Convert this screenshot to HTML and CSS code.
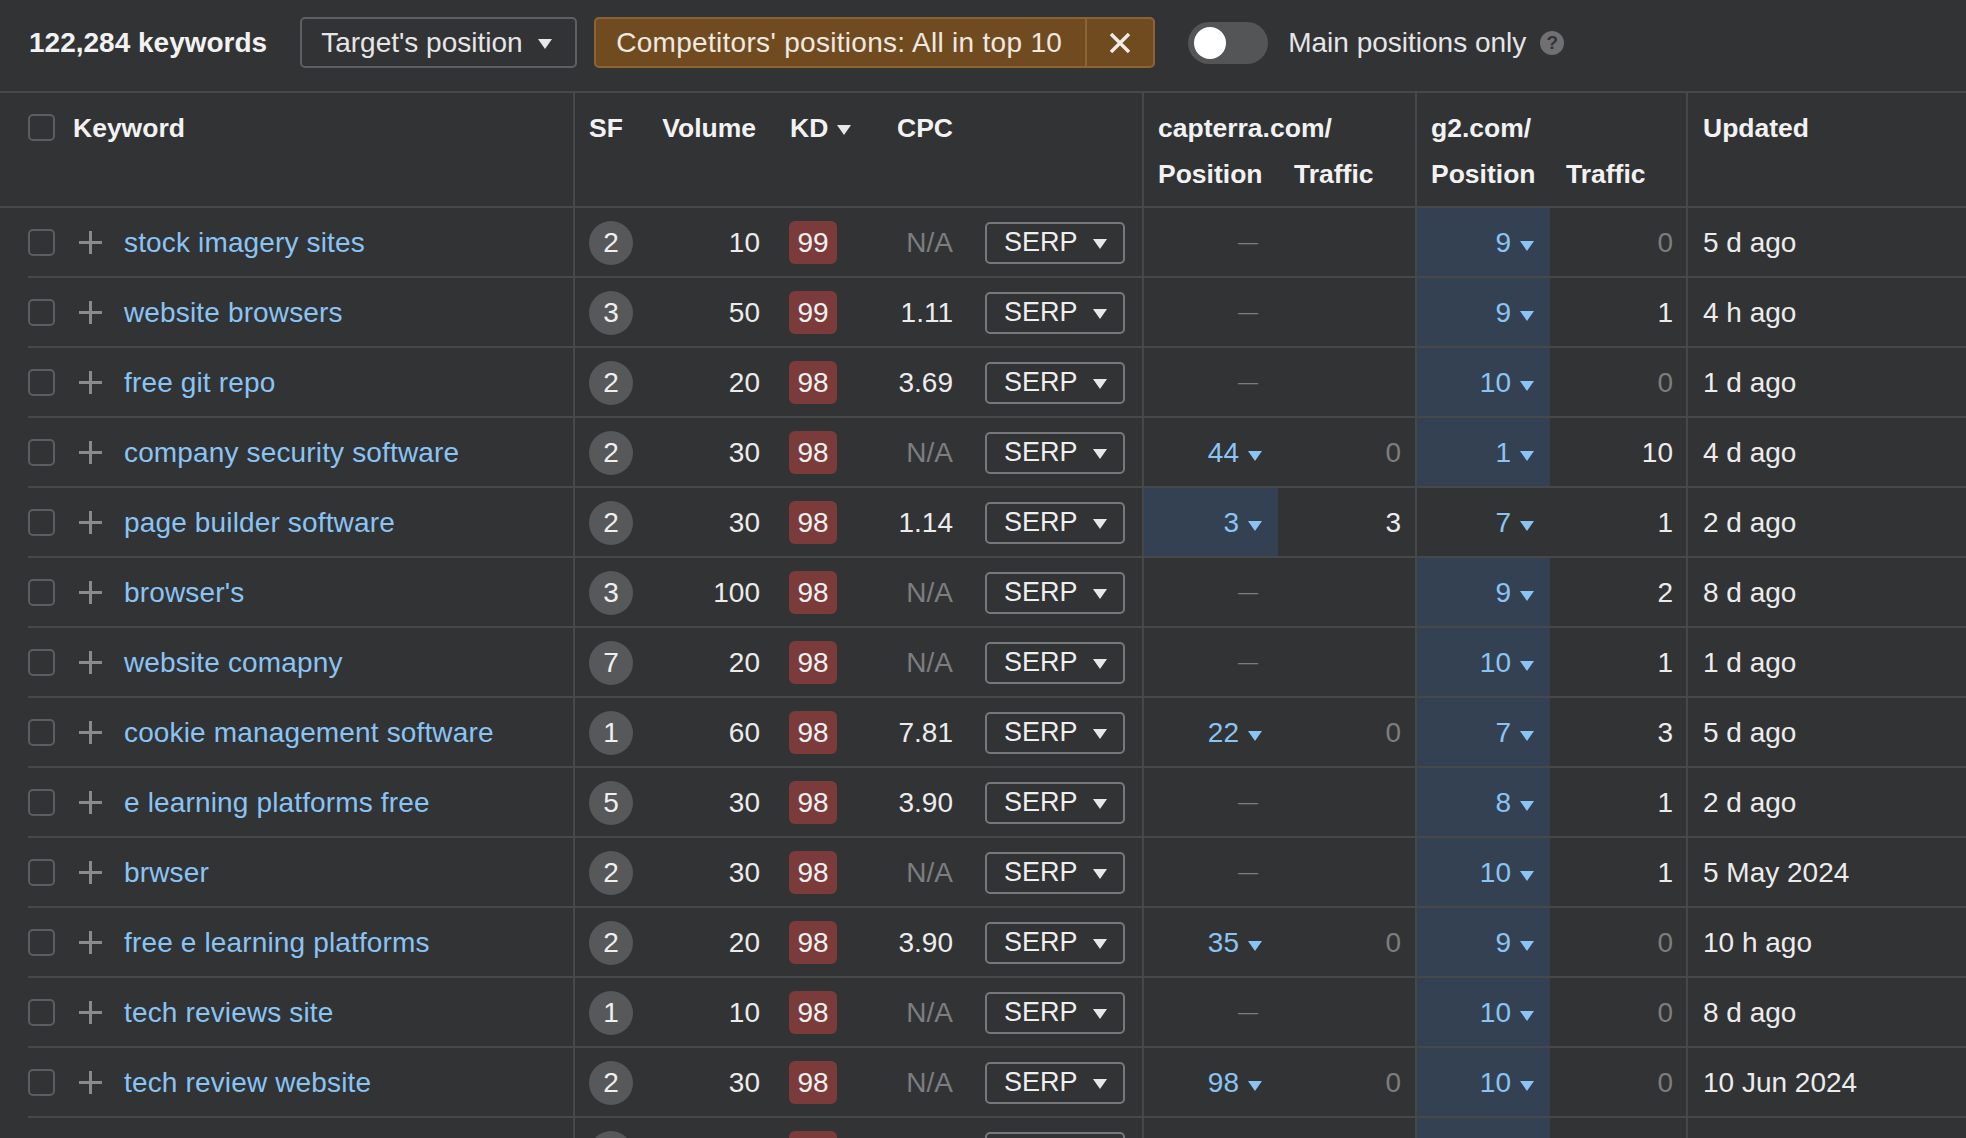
FILE: index.html
```html
<!DOCTYPE html>
<html lang="en">
<head>
<meta charset="utf-8">
<title>Keywords</title>
<link rel="stylesheet" href="styles.css">
</head>
<body>
<div class="topbar">
  <span class="count">122,284 keywords</span>
  <div class="select">Target's position<span class="caret"></span></div>
  <div class="chip">
    <span class="chip-label">Competitors' positions: All in top 10</span>
    <span class="chip-close"><svg width="24" height="24" viewBox="0 0 24 24"><path d="M3 3L21 21M21 3L3 21" stroke="#f1ece4" stroke-width="3.4" fill="none"/></svg></span>
  </div>
  <span class="toggle"><span class="knob"></span></span>
  <span class="toggle-label">Main positions only</span>
  <span class="help">?</span>
</div>

<div class="grid head">
  <div class="h kw"><span class="cb"></span>Keyword</div>
  <div class="h sf">SF</div>
  <div class="h vol">Volume</div>
  <div class="h kd">KD<span class="caret small"></span></div>
  <div class="h cpc">CPC</div>
  <div class="h serp"></div>
  <div class="h grp cap">
    <div class="dom">capterra.com/</div>
    <div class="sub"><span>Position</span><span>Traffic</span></div>
  </div>
  <div class="h grp g2">
    <div class="dom">g2.com/</div>
    <div class="sub"><span>Position</span><span>Traffic</span></div>
  </div>
  <div class="h upd">Updated</div>
</div>

<div id="rows"></div>
<script src="app.js"></script>
</body>
</html>
```
FILE: styles.css
```css
html, body {
  margin: 0;
  padding: 0;
  height: 100%;
  overflow: hidden;
  background: #323335;
}
body {
  font-family: "Liberation Sans", Arial, "Helvetica Neue", sans-serif;
  font-size: 28px;
  color: #ececec;
}
* { box-sizing: border-box; }

/* Top bar */
.topbar {
  height: 93px;
  border-bottom: 2px solid #47484a;
  display: flex;
  align-items: center;
  padding: 0 0 6px 29px;
}
.count {
  font-weight: bold;
  color: #f2f2f2;
}
.select {
  margin-left: 33px;
  height: 51px;
  width: 277px;
  border: 2px solid #5e5f62;
  border-radius: 5px;
  display: flex;
  align-items: center;
  padding: 0 0 0 19px;
  color: #e6e6e6;
}
.caret {
  display: inline-block;
  width: 0;
  height: 0;
  border-left: 7px solid transparent;
  border-right: 7px solid transparent;
  border-top: 10px solid #e8e8e8;
  margin-left: 15px;
  margin-top: 3px;
}
.caret.small {
  border-left-width: 7px;
  border-right-width: 7px;
  border-top-width: 10px;
  margin-left: 9px;
  margin-top: 8px;
}
.chip {
  margin-left: 17px;
  height: 51px;
  display: flex;
  background: #714b20;
  border: 2px solid #8c6434;
  border-radius: 5px;
  color: #efe9e1;
}
.chip-label {
  width: 489px;
  display: flex;
  align-items: center;
  padding-left: 20px;
  letter-spacing: 0.3px;
}
.chip-close {
  width: 68px;
  border-left: 2px solid #8c6434;
  display: flex;
  align-items: center;
  justify-content: center;
}
.toggle {
  margin-left: 33px;
  width: 80px;
  height: 42px;
  border-radius: 21px;
  background: #545557;
  position: relative;
}
.knob {
  position: absolute;
  left: 6px;
  top: 5px;
  width: 32px;
  height: 32px;
  border-radius: 50%;
  background: #ffffff;
}
.toggle-label {
  margin-left: 20px;
  color: #e6e6e6;
}
.help {
  margin-left: 14px;
  width: 24px;
  height: 24px;
  border-radius: 50%;
  background: #707072;
  color: #323335;
  font-size: 19px;
  font-weight: bold;
  display: flex;
  align-items: center;
  justify-content: center;
}

/* Grid */
.grid {
  display: grid;
  grid-template-columns: 575px 59px 126px 77px 116px 191px 134px 139px 133px 138px 1fr;
}
.head {
  height: 115px;
  border-bottom: 2px solid #47484a;
}
.h {
  font-weight: bold;
  font-size: 26.5px;
  color: #f2f2f2;
  line-height: 46px;
  padding-top: 12px;
  white-space: nowrap;
}
.h.kw {
  display: flex;
  align-items: flex-start;
  padding-left: 28px;
  border-right: 2px solid #47484a;
}
.h.kw .cb { margin-top: 9px; margin-right: 18px; }
.h.sf { padding-left: 14px; }
.h.vol { text-align: right; padding-right: 4px; }
.h.kd { padding-left: 30px; display: flex; align-items: flex-start; }
.h.kd .caret { margin-top: 20px; }
.h.cpc { text-align: right; }
.h.serp { border-right: 2px solid #47484a; }
.h.cap { grid-column: span 2; border-right: 2px solid #47484a; }
.h.g2 { grid-column: span 2; border-right: 2px solid #47484a; }
.dom { padding-left: 14px; }
.sub { display: grid; }
.cap .sub { grid-template-columns: 134px 1fr; }
.g2 .sub { grid-template-columns: 133px 1fr; }
.sub span:first-child { padding-left: 14px; }
.sub span:last-child { padding-left: 16px; }
.h.upd { padding-left: 15px; }

.cb {
  display: inline-block;
  width: 27px;
  height: 27px;
  border: 2px solid #5c5d60;
  border-radius: 5px;
  flex: none;
}

/* Rows */
.row { height: 70px; }
.c {
  border-bottom: 2px solid #47484a;
  display: flex;
  align-items: center;
  white-space: nowrap;
  padding-top: 1px;
}
.c.kw {
  margin-left: 28px;
  border-right: 2px solid #47484a;
}
.plus { margin-left: 23px; margin-right: 21px; flex: none; display: block; }
.kw-link { color: #8ac4f4; letter-spacing: 0.15px; }
.c.sf { padding-left: 14px; }
.sfc {
  width: 44px;
  height: 44px;
  border-radius: 50%;
  background: #57585a;
  display: flex;
  align-items: center;
  justify-content: center;
  color: #efefef;
}
.c.vol { justify-content: flex-end; }
.c.kd { padding-left: 29px; }
.kdb {
  width: 48px;
  height: 43px;
  border-radius: 6px;
  background: #7a3b3a;
  display: flex;
  align-items: center;
  justify-content: center;
  color: #f1f1f1;
}
.c.cpc { justify-content: flex-end; }
.muted { color: #7c7d7f; }
.c.serp {
  padding-left: 32px;
  border-right: 2px solid #47484a;
}
.serpb {
  width: 140px;
  height: 42px;
  border: 2px solid #77787b;
  border-radius: 5px;
  display: flex;
  align-items: center;
  justify-content: space-between;
  padding: 0 16px 0 17px;
  font-size: 27px;
  color: #efefef;
}
.serpb .caret { margin: 2px 0 0 0; }
.c.pos { justify-content: flex-end; padding-right: 16px; color: #8ac4f4; }
.c.pos.hl { background: #344152; }
.tri {
  display: inline-block;
  width: 0;
  height: 0;
  border-left: 7.5px solid transparent;
  border-right: 7.5px solid transparent;
  border-top: 10px solid #8ac4f4;
  margin-left: 9px;
  margin-top: 7px;
}
.c.dash { justify-content: flex-start; padding-left: 94px; color: #7c7d7f; font-size: 20px; }
.c.tr { justify-content: flex-end; padding-right: 14px; }
.c.tr.cap-tr { border-right: 2px solid #47484a; }
.c.tr.g2-tr { padding-right: 13px; border-right: 2px solid #47484a; }
.c.upd { padding-left: 15px; }
```
FILE: app.js
```javascript
var data = [
  ["stock imagery sites", 2, 10, 99, "N/A", null, null, 9, 0, "5 d ago"],
  ["website browsers", 3, 50, 99, "1.11", null, null, 9, 1, "4 h ago"],
  ["free git repo", 2, 20, 98, "3.69", null, null, 10, 0, "1 d ago"],
  ["company security software", 2, 30, 98, "N/A", 44, 0, 1, 10, "4 d ago"],
  ["page builder software", 2, 30, 98, "1.14", 3, 3, 7, 1, "2 d ago"],
  ["browser's", 3, 100, 98, "N/A", null, null, 9, 2, "8 d ago"],
  ["website comapny", 7, 20, 98, "N/A", null, null, 10, 1, "1 d ago"],
  ["cookie management software", 1, 60, 98, "7.81", 22, 0, 7, 3, "5 d ago"],
  ["e learning platforms free", 5, 30, 98, "3.90", null, null, 8, 1, "2 d ago"],
  ["brwser", 2, 30, 98, "N/A", null, null, 10, 1, "5 May 2024"],
  ["free e learning platforms", 2, 20, 98, "3.90", 35, 0, 9, 0, "10 h ago"],
  ["tech reviews site", 1, 10, 98, "N/A", null, null, 10, 0, "8 d ago"],
  ["tech review website", 2, 30, 98, "N/A", 98, 0, 10, 0, "10 Jun 2024"],
  ["tech review sites", 2, 30, 98, "N/A", null, null, 10, 0, "3 d ago"]
];

var plus = '<svg class="plus" width="25" height="25" viewBox="0 0 25 25"><path d="M12.5 1V24M1 12.5H24" stroke="#8a8b8d" stroke-width="3" fill="none"/></svg>';

var html = "";
data.forEach(function (r) {
  var capPos = r[5], capTr = r[6], g2Pos = r[7], g2Tr = r[8];
  var capBest = capPos !== null && capPos < g2Pos;
  var s = '<div class="grid row">';
  s += '<div class="c kw"><span class="cb"></span>' + plus + '<span class="kw-link">' + r[0] + '</span></div>';
  s += '<div class="c sf"><span class="sfc">' + r[1] + '</span></div>';
  s += '<div class="c vol">' + r[2] + '</div>';
  s += '<div class="c kd"><span class="kdb">' + r[3] + '</span></div>';
  s += '<div class="c cpc' + (r[4] === "N/A" ? ' muted' : '') + '">' + r[4] + '</div>';
  s += '<div class="c serp"><span class="serpb">SERP<span class="caret"></span></span></div>';
  if (capPos === null) {
    s += '<div class="c dash">—</div>';
    s += '<div class="c tr cap-tr"></div>';
  } else {
    s += '<div class="c pos' + (capBest ? ' hl' : '') + '">' + capPos + '<span class="tri"></span></div>';
    s += '<div class="c tr cap-tr' + (capTr === 0 ? ' muted' : '') + '">' + capTr + '</div>';
  }
  s += '<div class="c pos' + (capBest ? '' : ' hl') + '">' + g2Pos + '<span class="tri"></span></div>';
  s += '<div class="c tr g2-tr' + (g2Tr === 0 ? ' muted' : '') + '">' + g2Tr + '</div>';
  s += '<div class="c upd">' + r[9] + '</div>';
  s += '</div>';
  html += s;
});
document.getElementById("rows").innerHTML = html;
```
